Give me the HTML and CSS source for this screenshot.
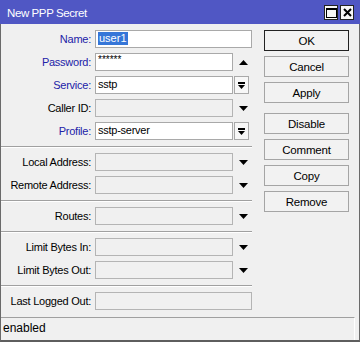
FILE: index.html
```html
<!DOCTYPE html>
<html>
<head>
<meta charset="utf-8">
<link rel="stylesheet" href="styles.css">
</head>
<body>
<div class="window">
  <div class="titlebar">
    <span class="title">New PPP Secret</span>
    <div class="tb-btns">
      <span class="tb-btn"><svg width="11" height="10" viewBox="0 0 11 10"><rect x="0.5" y="0.5" width="10" height="9" fill="none" stroke="#000" stroke-width="1"/><rect x="0" y="0" width="11" height="2" fill="#000"/></svg></span>
      <span class="tb-btn"><svg width="9" height="9" viewBox="0 0 9 9"><path d="M1 1L8 8M8 1L1 8" stroke="#000" stroke-width="2"/></svg></span>
    </div>
  </div>
  <div class="client">
    <div class="main">
      <div class="form">
        <div class="row"><span class="lbl blue">Name:</span><div class="field wide"><span class="sel">user1</span></div></div>
        <div class="row"><span class="lbl blue">Password:</span><div class="field pw">******</div><span class="arrow"><svg width="9" height="5" viewBox="0 0 9 5"><path d="M0 5L4.5 0L9 5Z" fill="#000"/></svg></span></div>
        <div class="row"><span class="lbl blue">Service:</span><div class="field">sstp</div><span class="dd"><svg width="7" height="7" viewBox="0 0 7 7"><rect x="0" y="0" width="7" height="2" fill="#000"/><path d="M0 3L7 3L3.5 7Z" fill="#000"/></svg></span></div>
        <div class="row"><span class="lbl">Caller ID:</span><div class="field dis"></div><span class="arrow"><svg width="9" height="5" viewBox="0 0 9 5"><path d="M0 0L9 0L4.5 5Z" fill="#000"/></svg></span></div>
        <div class="row"><span class="lbl blue">Profile:</span><div class="field">sstp-server</div><span class="dd"><svg width="7" height="7" viewBox="0 0 7 7"><rect x="0" y="0" width="7" height="2" fill="#000"/><path d="M0 3L7 3L3.5 7Z" fill="#000"/></svg></span></div>
        <div class="sep"></div>
        <div class="row"><span class="lbl">Local Address:</span><div class="field dis"></div><span class="arrow"><svg width="9" height="5" viewBox="0 0 9 5"><path d="M0 0L9 0L4.5 5Z" fill="#000"/></svg></span></div>
        <div class="row"><span class="lbl">Remote Address:</span><div class="field dis"></div><span class="arrow"><svg width="9" height="5" viewBox="0 0 9 5"><path d="M0 0L9 0L4.5 5Z" fill="#000"/></svg></span></div>
        <div class="sep"></div>
        <div class="row"><span class="lbl">Routes:</span><div class="field dis"></div><span class="arrow"><svg width="9" height="5" viewBox="0 0 9 5"><path d="M0 0L9 0L4.5 5Z" fill="#000"/></svg></span></div>
        <div class="sep"></div>
        <div class="row"><span class="lbl">Limit Bytes In:</span><div class="field dis"></div><span class="arrow"><svg width="9" height="5" viewBox="0 0 9 5"><path d="M0 0L9 0L4.5 5Z" fill="#000"/></svg></span></div>
        <div class="row"><span class="lbl">Limit Bytes Out:</span><div class="field dis"></div><span class="arrow"><svg width="9" height="5" viewBox="0 0 9 5"><path d="M0 0L9 0L4.5 5Z" fill="#000"/></svg></span></div>
        <div class="sep"></div>
        <div class="row"><span class="lbl">Last Logged Out:</span><div class="field dis wide"></div></div>
      </div>
      <div class="buttons">
        <div class="btn default">OK</div>
        <div class="btn">Cancel</div>
        <div class="btn">Apply</div>
        <div class="btn gap">Disable</div>
        <div class="btn">Comment</div>
        <div class="btn">Copy</div>
        <div class="btn">Remove</div>
      </div>
    </div>
    <div class="status">enabled</div>
  </div>
</div>
</body>
</html>
```

FILE: styles.css
```css
html, body {
  margin: 0;
  padding: 0;
}
body {
  width: 360px;
  height: 342px;
  font-family: "Liberation Sans", Arial, sans-serif;
  font-size: 11px;
  color: #000;
  background: #f0f0f0;
}
.window {
  width: 360px;
  height: 342px;
  display: flex;
  flex-direction: column;
}
.titlebar {
  height: 24px;
  flex: none;
  background: #5057c4;
  display: flex;
  align-items: center;
  justify-content: space-between;
  padding: 0 6px 0 7px;
}
.title {
  color: #fff;
  font-size: 11.5px;
  letter-spacing: -0.4px;
  padding-top: 1px;
}
.tb-btns {
  display: flex;
  gap: 2px;
  padding-top: 1px;
}
.tb-btn {
  width: 12px;
  height: 13px;
  background: #f7f7f7;
  border: 1px solid #222;
  display: flex;
  align-items: center;
  justify-content: center;
}
.client {
  flex: 1;
  display: flex;
  flex-direction: column;
  background: #f0f0f0;
  border-left: 1px solid #6a6a6a;
  border-right: 1px solid #6a6a6a;
  border-bottom: 2px solid #5e5e5e;
  padding-top: 6px;
}
.main {
  display: flex;
  gap: 12px;
}
.form {
  width: 251px;
  display: flex;
  flex-direction: column;
  gap: 5px;
}
.row {
  display: grid;
  grid-template-columns: 90px 138px 15px;
  column-gap: 4px;
  height: 18px;
  align-items: center;
}
.row .lbl {
  text-align: right;
  white-space: nowrap;
  letter-spacing: -0.25px;
}
.lbl.blue {
  color: #2222a8;
}
.field {
  height: 18px;
  box-sizing: border-box;
  background: #fff;
  border: 1px solid #a9a9a9;
  padding-left: 2px;
  line-height: 15px;
  letter-spacing: -0.25px;
  white-space: nowrap;
  overflow: hidden;
}
.field.wide {
  grid-column: 2 / 4;
}
.field.dis {
  background: #f0f0f0;
  border-color: #b4b4b4;
}
.field.pw {
  line-height: 9px;
  font-size: 10px;
  letter-spacing: 0;
  padding-top: 1px;
}
.sel {
  display: inline-block;
  background: #3676d8;
  color: #fff;
  line-height: 13px;
  padding: 0 1px;
  letter-spacing: 0;
}
.arrow {
  display: flex;
  justify-content: center;
  align-items: center;
  margin-left: -3px;
}
.dd {
  width: 15px;
  height: 18px;
  box-sizing: border-box;
  margin-left: -3px;
  border: 1px solid #a9a9a9;
  background: #f7f7f7;
  display: flex;
  justify-content: center;
  align-items: center;
}
.sep {
  height: 1px;
  background: #a0a0a0;
  box-shadow: 0 1px 0 #fff;
  margin: 1px 0;
}
.buttons {
  width: 85px;
  display: flex;
  flex-direction: column;
  gap: 5px;
}
.btn {
  height: 21px;
  box-sizing: border-box;
  border: 1px solid #a5a5a5;
  background: #f2f2f2;
  font-size: 11.5px;
  letter-spacing: -0.2px;
  display: flex;
  align-items: center;
  justify-content: center;
}
.btn.default {
  border-color: #222;
}
.btn.gap {
  margin-top: 5px;
}
.status {
  margin-top: auto;
  margin-right: 4px;
  height: 23px;
  box-sizing: border-box;
  border-top: 1px solid #a0a0a0;
  border-right: 1px solid #fff;
  padding-left: 2px;
  font-size: 12px;
  line-height: 21px;
}
```
